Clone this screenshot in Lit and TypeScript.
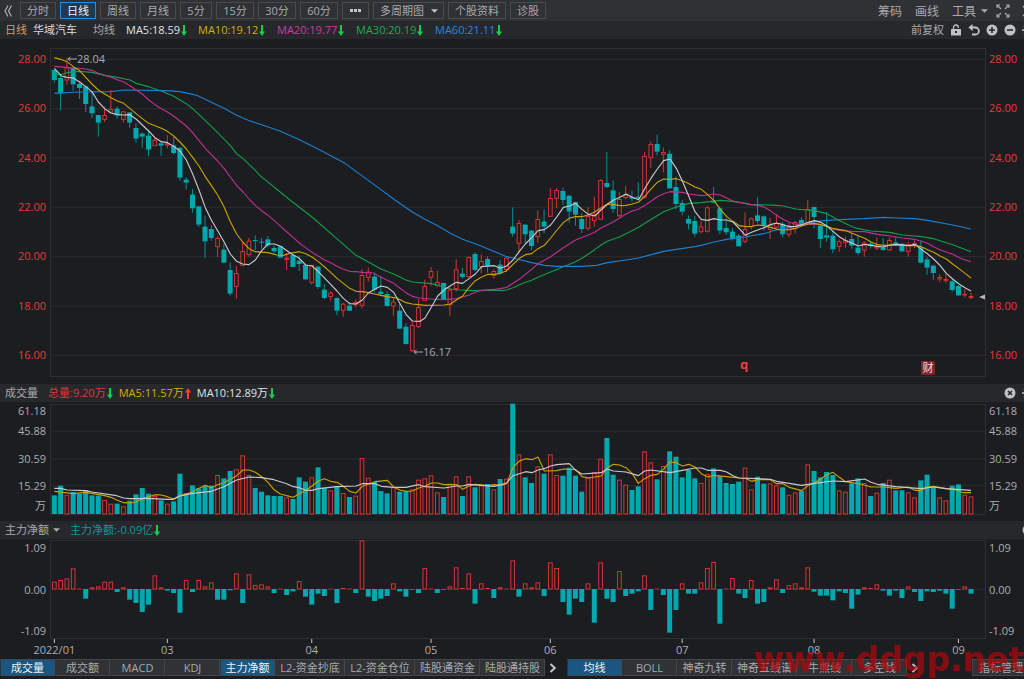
import { LitElement, html, svg, css } from "lit";
import { customElement, property, state } from "lit/decorators.js";
import { classMap } from "lit/directives/class-map.js";

/* Chart space: three units per screen pixel, origin at the window's top left. */
const FIRST_X = 163;
const PITCH = 18.836;
const PLOT = { x: 153, width: 2802 };
const xOf = (i: number) => FIRST_X + i * PITCH;

type Candle = { high: number; top: number; bottom: number; low: number; up: boolean };

/* high, body top, body bottom, low, direction */
function candles(base: number, rows: string): Candle[] {
  return rows.trim().split(/\s+/).map((row) => {
    const [high, top, bottom, low, dir] = row.split(",");
    return { high: +high + base, top: +top + base, bottom: +bottom + base, low: +low + base, up: dir === "u" };
  });
}

const CANDLES: Candle[] = [
  ...candles(120, `
    88,91,120,128,d 110,115,160,211,d 53,83,120,134,u 84,85,133,152,d 124,133,144,177,d 138,140,192,216,d
    157,200,220,234,d 225,226,248,290,d 200,226,238,246,u 150,208,216,220,u 199,207,226,236,d 213,215,238,248,u
    217,218,248,263,d 250,265,296,308,d 277,282,290,323,d 270,288,329,349,d 294,300,317,318,u 306,311,317,347,d
    285,311,315,325,u 292,317,339,344,d 322,324,413,422,d 411,420,428,449,d 447,465,505,518,d 498,500,554,561,d
    527,561,604,654,d 556,568,594,602,d 588,595,620,651,u 612,630,668,670,d 667,691,761,767,d 678,700,739,776,u
    608,634,676,678,u 594,603,644,650,u 586,601,603,630,d`),
  ...candles(600, `
    114,126,128,146,d 108,119,136,142,d 137,145,154,163,d 138,140,173,174,d 160,174,178,210,u 164,166,201,202,d
    166,183,192,213,d 194,196,238,240,d 193,196,248,254,u 200,201,261,267,d 252,270,294,298,d 273,279,290,302,u
    293,295,332,346,d 308,312,331,350,u 306,318,332,333,d 299,307,313,322,u 208,226,316,325,u 203,216,232,245,u
    222,231,269,277,d 229,276,282,288,d 274,283,318,320,d 294,306,318,347,u 312,333,386,387,d 370,381,432,434,d
    366,376,452,456,u 298,322,380,385,u 239,259,301,303,u 201,214,232,257,u 212,247,257,259,u 248,250,297,299,d
    256,270,314,347,u 178,209,266,275,u 204,222,231,236,d 169,172,230,232,u 157,163,210,213,d 163,184,200,220,u
    169,178,200,218,d 208,214,226,236,u 180,195,220,223,d 168,174,208,216,u`),
  ...candles(360, `
    262,321,341,350,d 300,310,370,400,u 313,315,343,370,d 330,333,378,390,d 271,298,350,368,u 268,306,320,340,d
    204,235,289,290,u 204,211,235,265,u 203,214,240,255,d 226,228,275,308,d 245,247,284,317,d 280,298,327,339,d
    261,289,325,332,u 230,285,302,320,u 178,181,298,300,u 96,190,201,204,d 182,212,267,278,d 217,238,287,291,u
    198,225,232,238,u 212,232,236,246,d 187,231,235,241,d 96,109,232,235,u 64,73,112,143,u 44,73,95,106,d
    82,97,103,157,u 91,102,205,207,d 170,202,252,268,d 240,250,275,286,d 287,298,311,328,d 288,304,341,350,d
    302,320,335,340,u 258,263,334,338,u 201,243,248,250,d 260,266,332,343,d 295,325,337,345,d 324,336,356,362,d
    342,348,379,380,d 277,328,364,370,u`),
  ...candles(540, `
    112,116,140,148,u 52,107,123,130,d 106,110,137,152,d 114,134,148,177,u 101,130,142,150,u 127,133,163,172,d
    128,137,163,172,u 123,127,145,160,u 112,121,135,138,d 60,88,129,132,u 80,82,111,145,d 136,138,177,204,d
    96,167,173,185,d 150,168,208,220,d 178,185,199,215,u 170,181,187,203,u 157,178,197,206,d 166,204,219,225,d
    184,188,210,230,u 185,192,198,205,d 172,200,204,210,u 174,203,210,212,d 173,181,210,212,u 172,188,194,198,d
    190,192,214,216,d 186,194,214,230,u 181,190,196,204,u 182,202,248,250,d 230,239,263,285,d 254,258,279,300,d
    283,292,297,306,u 282,298,302,308,u 297,305,330,336,d 316,319,346,348,d 328,343,346,352,u 338,349,353,357,u`),
];

/* Moves a run of "x,y" pairs into chart space. */
function run(dx: number, dy: number, pairs: string): string {
  return pairs.trim().split(/\s+/).map((p) => {
    const [x, y] = p.split(",");
    return `${+x + dx},${+y + dy}`;
  }).join(" ");
}

const PRICE_LINES = [
  { color: "#1c7fd0", points: [
    run(0, 120, "163,160 239,156 333,155 371,150 500,152 540,155 578,163 597,169 634,187 672,205 710,226 748,242 780,253"),
    "840,393 900,420 960,450 1035,490 1110,545",
    run(720, 600, "465,0 517,36 555,58 593,77 631,100 668,118 725,139 800,170"),
    run(1470, 360, "69,414 125,428 163,436 201,439 276,439 320,436 352,428 408,420 446,414 484,404 521,394 559,388 615,380 634,376 672,366 710,358 766,351"),
    run(2250, 540, "0,168 42,161 80,149 118,143 156,135 194,125 231,121 269,119 340,116 400,112 440,114 495,116 533,121 608,135 663,147"),
  ] },
  { color: "#169c48", points: [
    run(0, 120, "163,103 182,104 201,98 239,94 276,97 314,106 352,112 390,120 408,130 446,140 484,153 521,169 559,191 578,206 616,242 653,278 691,317 710,341 729,356 766,391 780,407"),
    run(720, 600, "150,0 216,51 280,107 348,166 385,186 423,207 461,222 498,240 517,246 574,251 612,261 630,267 660,270 700,272 744,271 781,271"),
    run(1470, 360, "35,512 50,510 69,503 106,487 125,481 144,472 182,456 220,440 257,425 276,415 314,389 333,375 352,364 390,350 446,322 484,298 521,275 559,261 597,250 634,248 690,241 729,244 766,250"),
    run(2250, 540, "0,73 80,76 100,78 137,87 194,92 231,101 250,112 269,122 307,140 325,146 363,153 420,157 457,165 514,170 551,176 608,194 663,215"),
  ] },
  { color: "#bf3093", points: [
    run(0, 120, "163,79 201,82 257,87 276,91 295,100 314,106 333,112 352,119 371,126 390,137 408,150 427,162 446,180 465,194 484,206 502,216 521,228 540,243 559,258 578,278 597,302 616,325 634,344 653,363 672,385 691,411 710,436 729,456"),
    run(720, 600, "30,0 50,20 70,36 84,46 103,62 122,79 141,96 160,113 178,129 197,143 216,157 235,169 254,180 272,188 291,199 310,208 329,214 348,215 367,217 400,219 415,227 440,240 461,250 479,264 498,278 517,289 536,294 574,297 612,299 649,296 668,291 687,285 706,277 725,271 763,268 781,266"),
    run(1470, 360, "50,502 69,490 88,478 106,463 125,448 144,431 182,410 220,383 257,360 295,345 314,337 333,324 371,305 408,282 427,273 446,267 465,256 484,243 502,230 521,221 540,215 578,217 597,222 634,227 653,225 672,222 691,225 710,234 729,243 748,247 766,250"),
    run(2250, 540, "0,74 23,76 42,81 61,92 80,106 99,118 118,127 137,133 175,132 212,134 250,146 269,151 307,154 344,155 382,163 420,168 457,174 495,178 514,184 533,190 551,200 570,209 608,223 635,236 663,245"),
  ] },
  { color: "#c9a200", points: [
    run(0, 120, "163,53 182,58 201,65 220,80 239,92 257,112 276,132 295,150 314,162 333,173 352,183 371,190 390,206 408,221 427,236 446,250 465,257 484,265 502,274 521,288 540,306 559,327 578,352 597,378 616,410 634,437 653,465 672,500 691,545 710,582"),
    run(720, 600, "8,126 27,146 46,155 84,158 110,165 130,166 150,160 178,155 197,161 216,171 235,185 254,201 272,217 291,235 310,250 329,265 348,274 367,275 385,278 404,282 423,286 442,290 470,294 498,308 517,312 555,316 612,315 631,312 649,300 668,288 687,262 706,242 725,231 744,223"),
    run(1470, 360, "12,463 31,460 50,452 69,433 88,415 106,404 125,401 144,386 163,376 182,354 201,330 220,308 239,294 257,290 276,290 295,284 314,276 333,264 352,252 371,254 390,257 408,256 427,252 446,246 465,228 484,206 502,187 521,177 540,178 559,176 578,182 597,191 615,201 634,208 653,224 672,242 691,268 710,290 729,304 748,317 766,320 785,319"),
    run(2250, 540, "23,135 42,137 61,142 80,148 99,150 118,149 137,145 156,138 175,132 194,130 212,134 231,139 250,146 269,149 288,152 307,160 325,167 344,175 363,186 382,194 401,196 440,195 476,197 495,196 514,200 533,209 551,217 570,228 589,237 608,252 627,266 646,281 663,294"),
  ] },
  { color: "#c8c9cc", points: [
    run(0, 120, "163,85 175,98 184,108 201,112 220,114 239,126 257,140 276,155 295,186 314,206 333,219 352,224 371,225 390,224 408,237 427,255 446,273 465,293 484,305 502,308 521,319 540,333 559,360 578,402 597,450 616,503 634,540 653,572 672,605 691,642 710,664"),
    run(720, 600, "8,192 27,194 46,180 65,152 84,132 103,132 122,139 141,152 160,165 178,175 197,195 216,198 235,215 272,253 291,273 310,295 329,311 348,312 367,300 385,279 404,268 423,258 442,262 461,277 479,309 498,343 517,363 540,364 555,354 574,322 593,288 612,270 631,257 649,247 668,250 687,236 706,222 725,200 744,198 763,197"),
    run(1470, 360, "31,445 50,438 69,420 88,394 106,372 125,353 144,332 163,329 182,315 201,290 220,262 239,258 257,250 276,268 295,283 314,288 333,270 352,253 371,240 390,232 408,222 427,232 446,239 465,205 484,173 502,147 521,122 540,117 559,145 578,185 597,230 615,275 634,298 653,301 672,296 691,300 710,300 729,306 748,326 766,346 785,337"),
    run(2250, 540, "23,150 42,143 61,134 80,129 99,134 118,140 137,139 156,134 175,127 194,122 212,127 231,138 250,155 269,171 288,182 307,190 325,198 344,193 382,199 401,201 420,195 440,193 476,197 495,193 514,208 533,222 551,237 570,256 589,280 608,297 627,312 646,324 663,333"),
  ] },
];

const VOLUME_BASE = 1542;
const VOLUMES = `
  346 317 344 336 342 330 346 347 360 371 371 379 362 343 324 341 348 361 371 364 281 339 316 325 317 317 285 295 273 268
  226 285 324 335 346 348 348 352 357 292 305 292 262 324 331 318 339 351 347 234 293 306 333 340 322 335 335 328 299 295
  286 337 351 311 289 348 289 322 316 312 328 297 296 71 223 292 309 259 281 223 285 287 263 287 335 293 277 236 174 284
  299 314 330 319 214 247 298 258 214 230 292 270 295 309 282 265 289 309 312 305 263 328 290 311 310 316 322 344 337 332
  253 273 292 276 285 331 335 310 295 309 348 338 309 299 331 331 337 352 301 284 323 352 361 317 313 344 349`
  .trim().split(/\s+/).map((v) => +v + 1140);

const VOLUME_LINES = [
  { color: "#c9a200", points: [
    run(0, 1140, "163,334 220,341 257,337 314,347 333,352 352,361 371,368 390,369 408,366 427,356 465,344 484,345 502,350 521,357 540,346 559,342 578,335 597,325 616,316 634,323 653,314 672,308 691,298 710,287 729,270 748,270 766,277 785,290 804,307 822,329 841,342 880,352 898,341 917,331 936,318 955,303 973,296 992,304 1011,307"),
    run(1020, 1140, "10,319 29,334 48,339 67,319 86,312 105,305 142,301 161,321 180,330 198,334 217,333 236,324 255,318 274,309 293,309 312,314 350,314 368,328 387,318 406,313 444,317 463,314 481,317 500,311 519,262 538,243 557,236 576,239 594,231 613,273 650,272 670,267 707,269 726,290 745,294 783,288 802,264 820,253 839,255 858,263 877,281 895,310 914,296 933,286 952,283 970,268 990,246 1009,248"),
    run(2040, 1140, "7,258 26,253 45,261 64,281 83,291 102,286 140,290 177,294 196,295 215,304 234,299 271,299 290,311 309,311 328,322 365,332 385,316 404,308 422,297 440,285 459,277 478,292 497,305 540,312 573,321 610,321 648,325 685,321 705,331 723,331 742,321 761,319 798,326 820,328 850,338 873,338"),
  ] },
  { color: "#c8c9cc", points: [
    run(0, 1140, "163,325 182,325 201,330 257,332 276,336 350,347 371,354 390,356 446,355 502,358 521,358 540,348 578,340 634,334 653,327 672,320 691,310 710,300 748,291 785,293 822,299 860,311 880,320 898,323 917,331 936,331 955,326 1011,320"),
    run(1020, 1140, "48,318 67,311 105,311 124,319 161,322 198,322 236,314 255,320 312,324 350,318 368,318 387,313 463,319 500,309 519,287 557,275 576,278 594,270 613,266 632,258 650,254 688,251 707,271 726,282 783,278 802,267 820,273 858,276 895,287 914,273 933,270 990,278"),
    run(2040, 1140, "7,271 45,264 64,264 83,271 121,271 140,276 159,287 177,294 234,296 271,298 290,304 365,316 404,310 459,303 497,305 554,297 573,307 592,313 648,320 685,323 723,326 761,321 798,326 873,331"),
  ] },
];

const FLOW_ZERO = 1767;
const FLOWS = `
  185 180 175 145 206 236 202 199 185 185 216 202 239 249 276 254 166 202 212 219 278 180 216 180 199 187 239 239 211 160
  249 163 195 193 199 219 206 225 214 183 230 254 221 228 206 249 204 206 219 61 230 243 236 228 190 214 230 209 219 144
  206 219 209 199 142 204 160 251 190 204 234 202 206 121 230 190 202 187 228 127 144 246 284 236 246 190 308 127 236 246
  153 228 221 214 166 270 206 225 338 270 190 221 221 187 144 126 311 206 174 221 234 180 251 246 202 178 219 195 190 202
  142 215 227 227 241 214 219 266 224 202 204 193 212 227 212 234 199 216 243 214 216 212 221 266 209 199 221`
  .trim().split(/\s+/).map((v) => +v + 1560);

const MONTHS: [string, number][] = [
  ["2022/01", 0], ["03", 18], ["04", 41], ["05", 60], ["06", 79], ["07", 100], ["08", 121], ["09", 144],
];

const pctX = (px: number) => `${((px * 3 - PLOT.x) / PLOT.width) * 100}%`;
const pctY = (px: number) => `${((px - 49) / 327) * 100}%`;

const bar = (i: number, from: number, to: number, up: boolean) => {
  const x = xOf(i);
  const top = Math.min(from, to);
  const height = Math.abs(to - from);
  return up
    ? height > 4
      ? svg`<rect class="up" x=${x - 5.5} y=${top + 1.5} width="11" height=${Math.max(height - 1.5, 1)}></rect>`
      : svg`<rect class="up-flat" x=${x - 7} y=${top} width="14" height=${Math.max(height, 2)}></rect>`
    : svg`<rect class="down" x=${x - 7.5} y=${top} width="15" height=${Math.max(height, 2)}></rect>`;
};

const lines = (set: { color: string; points: string[] }[]) =>
  set.map((l) => svg`<polyline class="line" stroke=${l.color} points=${l.points.join(" ")}></polyline>`);

const caret = html`<svg class="caret" viewBox="0 0 8 4" aria-hidden="true"><path d="M0 0h8L4 4z" fill="currentColor"></path></svg>`;

const chevron = html`<svg class="chevron" viewBox="0 0 8 10" aria-hidden="true">
  <path d="M1.5 1L5.8 5L1.5 9" fill="none" stroke="currentColor" stroke-width="2"></path></svg>`;

const gear = html`<svg class="icon" viewBox="0 0 12 12" aria-hidden="true">
  <circle cx="6" cy="6" r="3" fill="none" stroke="currentColor" stroke-width="2"></circle>
  <path d="M6 0v12M0 6h12M2 2l8 8M10 2l-8 8" stroke="currentColor" stroke-width="1.4" stroke-dasharray="2 8 2"></path></svg>`;

const trend = (up: boolean) => up
  ? html`<svg class="trend rise" viewBox="0 0 6 11" aria-label="升"><path d="M3 0L6 4.6H4V11H2V4.6H0z" fill="currentColor"></path></svg>`
  : html`<svg class="trend fall" viewBox="0 0 6 11" aria-label="降"><path d="M3 11L6 6.4H4V0H2V6.4H0z" fill="currentColor"></path></svg>`;

const shared = css`
  :host { box-sizing: border-box; min-width: 0; min-height: 0; }
  *, *::before, *::after { box-sizing: border-box; }
  svg { display: block; }
  button, select {
    margin: 0; padding: 0; border: 0; border-radius: 0; background: none;
    color: inherit; font: inherit; white-space: nowrap; cursor: pointer;
  }
  .caret { width: 7px; height: 4px; flex: none; }
  .icon { width: 12px; height: 12px; flex: none; }
  .picker { display: grid; grid-template-columns: 1fr auto; align-items: center; }
  .picker select { grid-area: 1 / 1 / 2 / 3; appearance: none; height: 100%; }
  .picker .caret { grid-area: 1 / 2; pointer-events: none; }
`;

@customElement("period-toolbar")
export class PeriodToolbar extends LitElement {
  @state() private active = "日线";
  static styles = [shared, css`
    :host { display: flex; align-items: center; justify-content: space-between; background: #303135; color: #a9aaae; overflow: hidden; }
    .side { display: flex; align-items: center; flex: none; }
    .periods { gap: 4px; }
    .collapse { width: 16px; padding-left: 4px; color: #b8b9bc; }
    .collapse svg { width: 8px; height: 12px; }
    .period, .picker { height: 17px; border: 1px solid #4a4b4f; line-height: 15px; }
    .period { padding: 0 6px; }
    .short { min-width: 32px; }
    .minutes { min-width: 38px; }
    .active { border-color: #1f8fe6; background: #213a50; color: #f0f2f4; }
    .more { color: #c4c5c8; }
    .more svg { width: 13px; height: 3px; }
    .picker select { padding: 0 19px 0 6px; }
    .picker .caret { margin-right: 5px; color: #c4c5c8; }
    .tools { gap: 13px; font-size: 12px; }
    .menu { display: flex; align-items: center; gap: 5px; }
    .icons { display: flex; gap: 12px; margin-right: -10px; margin-left: -5px; }
    .full { width: 14px; height: 14px; }
  `];
  private period(name: string, size = "") {
    return html`<button class="${classMap({ period: true, short: size === "short", minutes: size === "minutes", active: this.active === name })}"
      aria-pressed=${this.active === name} @click=${() => (this.active = name)}>${name}</button>`;
  }
  render() {
    return html`
      <div class="side periods">
        <button class="collapse" aria-label="收起"><svg viewBox="0 0 8 12" aria-hidden="true">
          <path d="M4 .5L1 6l3 5.5M7.5 .5l-3 5.5 3 5.5" fill="none" stroke="currentColor" stroke-width="1.1"></path></svg></button>
        ${["分时", "日线", "周线", "月线"].map((n) => this.period(n))}
        ${this.period("5分", "short")}
        ${["15分", "30分", "60分"].map((n) => this.period(n, "minutes"))}
        <button class="period more" aria-label="更多周期"><svg viewBox="0 0 13 3" aria-hidden="true">
          <path d="M1 0h3v3H1zM5 0h3v3H5zM9 0h3v3H9z" fill="currentColor"></path></svg></button>
        <label class="picker"><select aria-label="多周期图"><option>多周期图</option></select>${caret}</label>
        <button class="period">个股资料</button>
        <button class="period">诊股</button>
      </div>
      <div class="side tools">
        <button>筹码</button>
        <button>画线</button>
        <button class="menu">工具${caret}</button>
        <div class="icons">
          <button aria-label="全屏"><svg class="full" viewBox="0 0 14 14" aria-hidden="true">
            <path d="M1 4V1h3M1 1l4 4M10 1h3v3M13 1L9 5M1 10v3h3M1 13l4-4M13 10v3h-3M13 13L9 9" fill="none" stroke="currentColor" stroke-width="1.1"></path></svg></button>
          <button aria-label="关闭"><svg class="icon" viewBox="0 0 12 12" aria-hidden="true">
            <path d="M1 1l10 10M11 1L1 11" stroke="currentColor" stroke-width="1.4"></path></svg></button>
        </div>
      </div>`;
  }
}

@customElement("price-header")
export class PriceHeader extends LitElement {
  static styles = [shared, css`
    :host { display: flex; align-items: center; justify-content: space-between; background: #27282c; color: #a9aaad; overflow: hidden; padding-left: 5px; line-height: 18px; }
    .side { display: flex; align-items: center; flex: none; }
    .period { width: 28px; color: #d39b66; }
    .name { width: 60px; color: #dcdde0; }
    .group { width: 33px; }
    .ma { display: flex; align-items: center; gap: 1px; width: 79px; }
    .ma:nth-of-type(1) { width: 72px; }
    .ma5 { color: #e2e3e6; } .ma10 { color: #d8ae00; } .ma20 { color: #d237a6; } .ma30 { color: #18ad4f; } .ma60 { color: #1d8ae2; }
    .trend { width: 6px; height: 11px; color: #14cf4d; }
    .tools { color: #c0c1c4; gap: 6px; margin-right: -10px; }
    .adjust { color: #a9aaad; }
  `];
  render() {
    const averages = [["ma5", "MA5:18.59"], ["ma10", "MA10:19.12"], ["ma20", "MA20:19.77"], ["ma30", "MA30:20.19"], ["ma60", "MA60:21.11"]];
    return html`
      <div class="side">
        <span class="period">日线</span><span class="name">华域汽车</span><span class="group">均线</span>
        ${averages.map(([cls, text]) => html`<div class="ma ${cls}">${text}${trend(false)}</div>`)}
      </div>
      <div class="side tools">
        <button class="adjust">前复权</button>
        <button aria-label="锁定"><svg class="icon" viewBox="0 0 12 12" aria-hidden="true">
          <path d="M3.5 5V3.4a2.4 2.4 0 0 1 4.8 0V4" fill="none" stroke="currentColor" stroke-width="1.3"></path>
          <path fill-rule="evenodd" d="M1 5h10v6.5H1zM5 7v2h2V7z" fill="currentColor"></path></svg></button>
        <button aria-label="撤销"><svg class="icon" viewBox="0 0 12 12" aria-hidden="true">
          <path d="M2 3.5h5.4a3.5 3.5 0 0 1 0 7H4" fill="none" stroke="currentColor" stroke-width="1.8"></path>
          <path d="M4.6 0v7L.4 3.5z" fill="currentColor"></path></svg></button>
        <button aria-label="放大"><svg class="icon" viewBox="0 0 12 12" aria-hidden="true">
          <circle cx="6" cy="6" r="5.5" fill="currentColor"></circle><path d="M6 3v6M3 6h6" stroke="#27282c" stroke-width="1.6"></path></svg></button>
        <button aria-label="缩小"><svg class="icon" viewBox="0 0 12 12" aria-hidden="true">
          <circle cx="6" cy="6" r="5.5" fill="currentColor"></circle><path d="M3 6h6" stroke="#27282c" stroke-width="1.6"></path></svg></button>
        <button aria-label="设置">${gear}</button>
      </div>`;
  }
}

@customElement("panel-header")
export class PanelHeader extends LitElement {
  @property() kind = "volume";
  static styles = [shared, css`
    :host { display: flex; align-items: center; justify-content: space-between; background: #27282c; color: #a9aaad; overflow: hidden; padding-left: 5px; line-height: 18px; }
    .side { display: flex; align-items: center; flex: none; gap: 10px; }
    .values { display: flex; gap: 6px; }
    .value { display: flex; align-items: center; gap: 1px; }
    .total { color: #df3737; } .avg5 { color: #d8ae00; } .avg10 { color: #e2e3e6; } .flow { color: #0f999e; }
    .trend { width: 6px; height: 11px; }
    .rise { color: #ff3b30; } .fall { color: #14cf4d; }
    .picker select { padding-right: 11px; }
    .tools { gap: 6px; margin-right: -10px; color: #c0c1c4; }
  `];
  render() {
    const gearButton = html`<button aria-label="设置">${gear}</button>`;
    if (this.kind === "flow") {
      return html`
        <div class="side">
          <label class="picker"><select aria-label="副图指标"><option>主力净额</option></select>${caret}</label>
          <span class="value flow">主力净额:-0.09亿${trend(false)}</span>
        </div>
        <div class="side tools"><button aria-label="关闭"><svg class="icon" viewBox="0 0 12 12" aria-hidden="true">
          <circle cx="6" cy="6" r="5.5" fill="currentColor"></circle></svg></button></div>`;
    }
    return html`
      <div class="side">
        <span>成交量</span>
        <div class="values">
          <span class="value total">总量:9.20万${trend(false)}</span>
          <span class="value avg5">MA5:11.57万${trend(true)}</span>
          <span class="value avg10">MA10:12.89万${trend(false)}</span>
        </div>
      </div>
      <div class="side tools">
        <button aria-label="关闭"><svg class="icon" viewBox="0 0 12 12" aria-hidden="true">
          <circle cx="6" cy="6" r="5.5" fill="currentColor"></circle><path d="M4 4l4 4M8 4L4 8" stroke="#27282c" stroke-width="1.6"></path></svg></button>
        ${gearButton}
      </div>`;
  }
}

const chartStyles = css`
  :host { display: grid; grid-template-columns: 50px minmax(0, 1fr) 38px; grid-template-rows: minmax(0, 1fr); color: #adaeb2; }
  .plot { position: relative; border: 1px solid #2e2f33; min-width: 0; min-height: 0; }
  .plot > svg { width: 100%; height: 100%; position: absolute; inset: 0; overflow: visible; }
  .rail { display: flex; flex-direction: column; justify-content: space-between; line-height: 16px; min-height: 0; }
  .left { text-align: right; padding-right: 4px; }
  .right { padding-left: 3px; }
  .grid { stroke: #2b2c30; stroke-width: 3; }
  .line { fill: none; stroke-width: 3.4; stroke-linejoin: round; }
  .up { fill: #1c1d21; stroke: #d63434; stroke-width: 3; }
  .up-flat { fill: #e83838; }
  .down { fill: #00a8b0; }
  .wick-up { stroke: #d63434; stroke-width: 3; }
  .wick-down { stroke: #078f96; stroke-width: 3; }
`;

const grid = (ys: number[]) => ys.map((y) => svg`<line class="grid" x1="153" x2="2955" y1=${y} y2=${y}></line>`);

@customElement("price-chart")
export class PriceChart extends LitElement {
  static styles = [shared, chartStyles, css`
    :host { padding: 9px 0 7px; }
    .rail { color: #e83838; padding-top: 3px; padding-bottom: 14px; }
    .note { fill: #a9aaad; }
    .pointer { stroke: #a9aaad; }
    .event { fill: #f03c3c; font-weight: 700; font-size: 13px; }
    .badge { fill: #7c2629; }
    .badge-text { fill: #f0dede; }
  `];
  render() {
    const labels = ["28.00", "26.00", "24.00", "22.00", "20.00", "18.00", "16.00"].map((t) => html`<span>${t}</span>`);
    return html`
      <div class="rail left">${labels}</div>
      <div class="plot">
        <svg viewBox="153 147 2802 981" preserveAspectRatio="none" role="img" aria-label="日线">
          ${grid([178, 326, 474, 622, 770, 918, 1066])}
          ${CANDLES.map((c, i) => {
            const x = xOf(i);
            const wick = c.up ? "wick-up" : "wick-down";
            return svg`<line class=${wick} x1=${x} x2=${x} y1=${c.high} y2=${c.top}></line>
              <line class=${wick} x1=${x} x2=${x} y1=${c.bottom} y2=${c.low}></line>
              ${bar(i, c.top - 1, c.bottom, c.up)}`;
          })}
          ${lines(PRICE_LINES)}
        </svg>
        <svg>
          <svg x=${pctX(67)} y=${pctY(55)} width="60" height="14" overflow="visible">
            <path class="pointer" d="M1 4h9M1 4l2.500-2M1 4l2.500 2" fill="none"></path>
            <text class="note" x="10" y="8">28.04</text>
          </svg>
          <svg x=${pctX(413)} y=${pctY(348)} width="60" height="14" overflow="visible">
            <path class="pointer" d="M1 4h9M1 4l2.500-2M1 4l2.500 2" fill="none"></path>
            <text class="note" x="10" y="8">16.17</text>
          </svg>
          <text class="event" x=${pctX(740)} y=${pctY(369)}>q</text>
          <svg x=${pctX(921)} y=${pctY(361)} width="14" height="14" overflow="visible">
            <rect class="badge" width="14" height="14" rx="1"></rect>
            <text class="badge-text" x="7" y="11" text-anchor="middle">财</text>
          </svg>
          <svg x=${pctX(979)} y=${pctY(294)} width="6" height="6"><path d="M6 0.500v5L0 3z" fill="#b8b9bc"></path></svg>
        </svg>
      </div>
      <div class="rail right">${labels}</div>`;
  }
}

@customElement("volume-chart")
export class VolumeChart extends LitElement {
  static styles = [shared, chartStyles, css`
    :host { padding: 2px 0 6px; }
    .rail {
      display: grid;
      grid-template-columns: minmax(0, 1fr);
      grid-template-rows: minmax(0, 14fr) minmax(0, 25fr) minmax(0, 31fr) minmax(0, 23fr) minmax(0, 18fr);
      align-items: center;
    }
  `];
  render() {
    const labels = ["61.18", "45.88", "30.59", "15.29", "万"].map((t) => html`<span>${t}</span>`);
    return html`
      <div class="rail left">${labels}</div>
      <div class="plot">
        <svg viewBox="153 1215 2802 327" preserveAspectRatio="none" role="img" aria-label="成交量">
          ${grid([1294, 1377, 1457])}
          ${VOLUMES.map((v, i) => bar(i, v, VOLUME_BASE, CANDLES[i].up))}
          ${lines(VOLUME_LINES)}
        </svg>
      </div>
      <div class="rail right">${labels}</div>`;
  }
}

@customElement("flow-chart")
export class FlowChart extends LitElement {
  static styles = [shared, chartStyles, css`
    :host { grid-template-rows: minmax(0, 1fr) 19px; padding-top: 1px; }
    .months { grid-column: 2; width: calc(100% - 2px); height: 19px; margin: 0 1px; overflow: visible; }
    .month { fill: #adaeb2; text-anchor: middle; }
    .tick { stroke: #c4c5c8; }
  `];
  render() {
    const labels = ["1.09", "0.00", "-1.09"].map((t) => html`<span>${t}</span>`);
    return html`
      <div class="rail left">${labels}</div>
      <div class="plot">
        <svg viewBox="153 1623 2802 291" preserveAspectRatio="none" role="img" aria-label="主力净额">
          ${grid([FLOW_ZERO + 1])}
          ${FLOWS.map((v, i) => bar(i, v, FLOW_ZERO, v < FLOW_ZERO))}
        </svg>
      </div>
      <div class="rail right">${labels}</div>
      <svg class="months">
        ${MONTHS.map(([name, i]) => {
          const x = pctX(xOf(i) / 3);
          return svg`<line class="tick" x1=${x} x2=${x} y1="-1" y2="4"></line><text class="month" x=${x} y="15">${name}</text>`;
        })}
      </svg>`;
  }
}

@customElement("indicator-tabs")
export class IndicatorTabs extends LitElement {
  @state() private active = ["成交量", "主力净额", "均线"];
  static styles = [shared, css`
    :host { display: flex; align-items: center; padding-bottom: 2px; color: #a9aaae; overflow: hidden; }
    .group { display: flex; flex: none; }
    .tab, .manage { height: 17px; min-width: 55px; padding: 0 4px; border: 1px solid #46474b; border-left-color: #303236; background: #303236; line-height: 15px; text-align: center; }
    .wide { min-width: 65px; }
    .widest { min-width: 70px; padding: 0; }
    .active { background: #1a5682; color: #f0f2f4; }
    .next { width: 22px; padding-left: 4px; color: #c4c5c8; }
    .next svg { width: 8px; height: 10px; }
    .manage { flex: none; margin-left: auto; margin-right: -6px; padding: 0 6px; border-left-color: #46474b; }
  `];
  private tab(name: string, size = "") {
    const on = this.active.includes(name);
    return html`<button class="tab ${size} ${on ? "active" : ""}" aria-pressed=${on}
      @click=${() => (this.active = on ? this.active.filter((n) => n !== name) : [...this.active, name])}>${name}</button>`;
  }
  render() {
    return html`
      <div class="group">
        ${["成交量", "成交额", "MACD", "KDJ", "主力净额"].map((n) => this.tab(n))}
        ${["L2-资金抄底", "L2-资金仓位"].map((n) => this.tab(n, "widest"))}
        ${["陆股通资金", "陆股通持股"].map((n) => this.tab(n, "wide"))}
        <button class="next" aria-label="更多副图指标">${chevron}</button>
      </div>
      <div class="group">
        ${["均线", "BOLL", "神奇九转"].map((n) => this.tab(n))}
        ${this.tab("神奇五线谱", "wide")}
        ${["牛熊线", "多空线"].map((n) => this.tab(n))}
        <button class="next" aria-label="更多主图指标">${chevron}</button>
      </div>
      <button class="manage">指标管理</button>`;
  }
}

@customElement("app-root")
export class AppRoot extends LitElement {
  static styles = css`
    :host {
      display: grid;
      position: relative;
      height: 100vh;
      grid-template-columns: minmax(0, 1fr);
      grid-template-rows: 21px 18px minmax(0, 345fr) 18px minmax(0, 119fr) 18px minmax(0, 119fr) 21px;
      overflow: hidden;
      background: #1c1d21;
      font: 11px "Open Sans", "Noto Sans CJK SC", sans-serif;
    }
    .watermark {
      position: absolute;
      right: 0;
      bottom: 0;
      color: rgba(180, 6, 10, 0.7);
      font: 700 33px/38px "DejaVu Sans", sans-serif;
      pointer-events: none;
    }
  `;
  render() {
    return html`
      <period-toolbar></period-toolbar>
      <price-header></price-header>
      <price-chart></price-chart>
      <panel-header kind="volume"></panel-header>
      <volume-chart></volume-chart>
      <panel-header kind="flow"></panel-header>
      <flow-chart></flow-chart>
      <indicator-tabs></indicator-tabs>
      <div class="watermark">www.ddgp.net</div>`;
  }
}
